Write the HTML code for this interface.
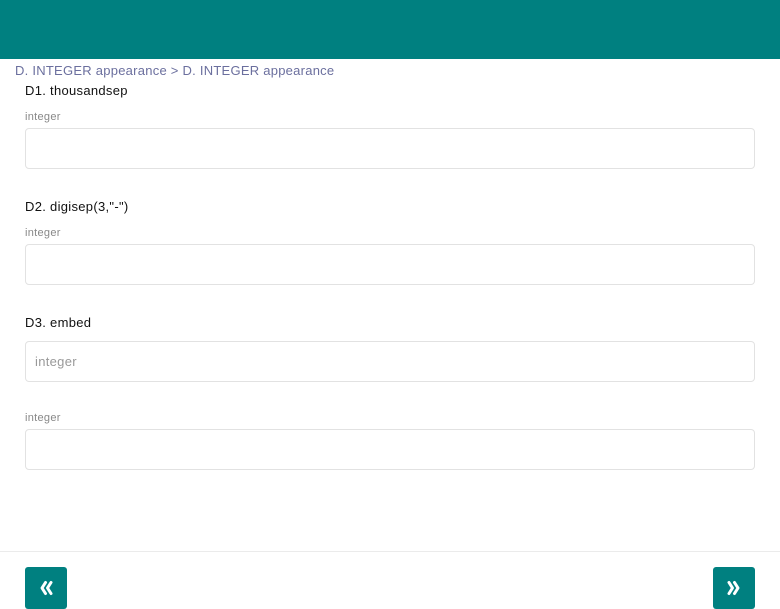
<!DOCTYPE html>
<html><head><style>
body{margin:0;width:780px;height:609px;overflow:hidden;background:#fff;font-family:"Liberation Sans",sans-serif;position:relative}
.hdr{position:absolute;left:0;top:0;width:780px;height:59px;background:#008080}
.t{position:absolute;white-space:nowrap}
.crumb{left:15px;top:63px;font-size:13px;letter-spacing:0.25px;color:#6b6f9e}
.q{left:25px;font-size:13px;letter-spacing:0.3px;color:#111}
.lab{left:25px;font-size:11px;letter-spacing:0.3px;color:#888}
.in{position:absolute;left:25px;width:728px;height:39px;border:1px solid #e2e2e2;border-radius:4px;background:#fff}
.ph{position:absolute;left:9px;top:12px;font-size:13px;letter-spacing:0.3px;color:#999}
.line{position:absolute;left:0;top:551px;width:780px;height:1px;background:#ebebeb}
.btn{position:absolute;top:567px;width:42px;height:42px;background:#008080;border-radius:3px}
.btn svg{position:absolute;left:11px;top:11px}
</style></head><body>
<div class="hdr"></div>
<div class="t crumb">D. INTEGER appearance &gt; D. INTEGER appearance</div>
<div class="t q" style="top:83px">D1. thousandsep</div>
<div class="t lab" style="top:111px">integer</div>
<div class="in" style="top:128px"></div>
<div class="t q" style="top:199px">D2. digisep(3,"-")</div>
<div class="t lab" style="top:227px">integer</div>
<div class="in" style="top:244px"></div>
<div class="t q" style="top:315px">D3. embed</div>
<div class="in" style="top:341px"><span class="ph">integer</span></div>
<div class="t lab" style="top:412px">integer</div>
<div class="in" style="top:429px"></div>
<div class="line"></div>
<div class="btn" style="left:25px"><svg width="20" height="20" viewBox="0 0 20 20"><path d="M9.5 4.5 L6 10 L9.5 15.5 M15 4.5 L11.5 10 L15 15.5" stroke="#fff" stroke-width="3" fill="none" stroke-linecap="round" stroke-linejoin="round"/></svg></div>
<div class="btn" style="left:713px"><svg width="20" height="20" viewBox="0 0 20 20"><path d="M5 4.5 L8.5 10 L5 15.5 M10.5 4.5 L14 10 L10.5 15.5" stroke="#fff" stroke-width="3" fill="none" stroke-linecap="round" stroke-linejoin="round"/></svg></div>
</body></html>
